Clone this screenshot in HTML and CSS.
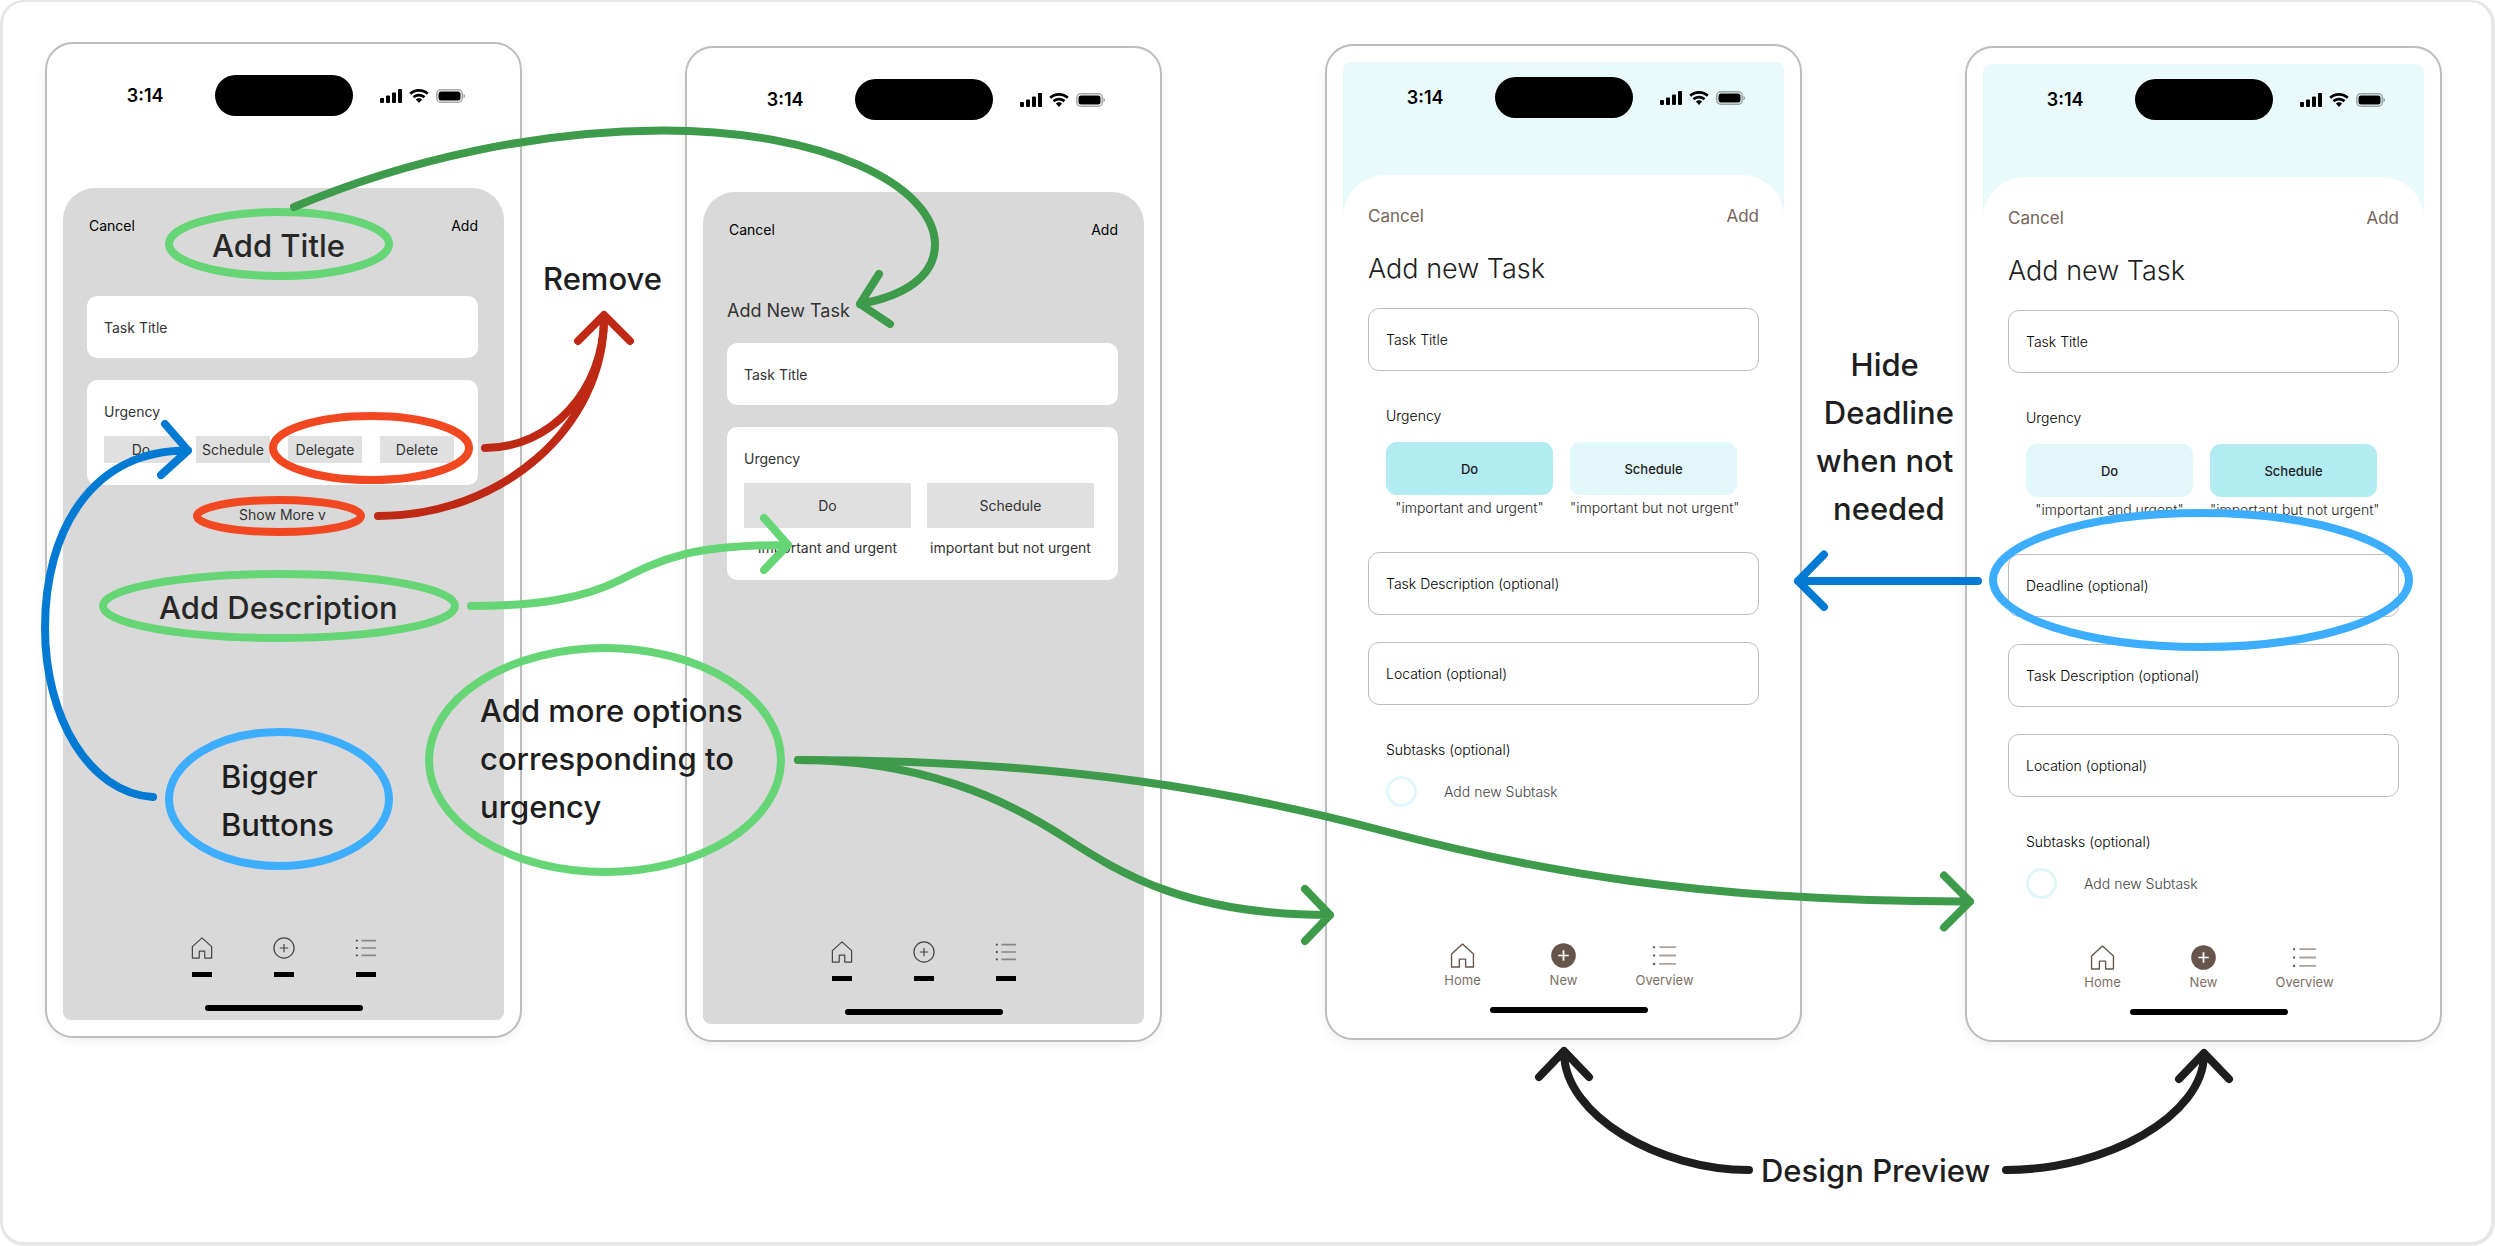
FILE: index.html
```html
<!DOCTYPE html>
<html lang="en">
<head>
<meta charset="utf-8">
<title>Add Task – design iterations</title>
<link rel="stylesheet" href="styles.css">
</head>
<body>
<svg class="defs" aria-hidden="true">
  <symbol id="signal" viewBox="0 0 22 14"><rect x="0" y="9" width="4" height="5" rx="1"/><rect x="6" y="6.500" width="4" height="7.500" rx="1"/><rect x="12" y="3.500" width="4" height="10.500" rx="1"/><rect x="18" y="0" width="4" height="14" rx="1"/></symbol>
  <symbol id="wifi" viewBox="0 0 20 14"><path d="M10 0C6.200 0 2.700 1.400 .3 3.700L2.200 5.700C4.200 3.800 7 2.700 10 2.700s5.800 1.100 7.800 3l1.900-2C17.300 1.400 13.800 0 10 0z"/><path d="M10 4.700c-2.500 0-4.700.9-6.400 2.500l1.900 2C6.700 8.100 8.300 7.400 10 7.400s3.300.7 4.500 1.800l1.900-2C14.700 5.600 12.500 4.700 10 4.700z"/><path d="M10 9.300c-1.200 0-2.300.5-3.100 1.300L10 14l3.100-3.400C12.300 9.800 11.200 9.300 10 9.300z"/></symbol>
  <symbol id="battery" viewBox="0 0 30 14"><rect x=".75" y=".75" width="25.500" height="12.500" rx="4" fill="none" stroke="#000" stroke-opacity=".35" stroke-width="1.500"/><rect x="2.500" y="2.500" width="22" height="9" rx="2.500"/><path d="M27.500 4.700v4.600c.9-.4 1.500-1.300 1.500-2.300s-.6-1.900-1.500-2.300z" fill-opacity=".4"/></symbol>
  <symbol id="home" viewBox="0 0 24 24"><path d="M12 1L1.500 10.500V23h7.500v-7.500h6V23h7.500V10.500z" fill="none" stroke="currentColor" stroke-width="1.300" stroke-linejoin="round"/></symbol>
  <symbol id="plus" viewBox="0 0 24 24"><circle cx="12" cy="12" r="11" fill="none" stroke="currentColor" stroke-width="1.300"/><path d="M12 7.500v9M7.500 12h9" stroke="currentColor" stroke-width="1.300"/></symbol>
  <symbol id="plus-solid" viewBox="0 0 26 26"><circle cx="13" cy="13" r="12.800" fill="currentColor"/><path d="M13 7.500v11M7.500 13h11" stroke="#fff" stroke-width="1.800"/></symbol>
  <symbol id="list" viewBox="0 0 24 24"><path d="M7 4h16M7 12h16M7 20h16" stroke="currentColor" stroke-width="1.800" opacity=".55"/><path d="M1 4h2M1 12h2M1 20h2" stroke="currentColor" stroke-width="2"/></symbol>
</svg>

<main class="board">

  <section class="phone phone-1 wireframe">
    <div class="screen">
      <header class="status"><span class="time">3:14</span><span class="island"></span><span class="system"><svg class="signal"><use href="#signal"/></svg><svg class="wifi"><use href="#wifi"/></svg><svg class="battery"><use href="#battery"/></svg></span></header>
      <div class="sheet">
        <form class="form">
          <div class="actions"><button type="button">Cancel</button><button type="button">Add</button></div>
          <input class="field spaced" type="text" placeholder="Task Title" aria-label="Task Title">
          <div class="card" role="group" aria-labelledby="u1">
            <p class="label" id="u1">Urgency</p>
            <div class="choices small">
              <button type="button">Do</button><button type="button">Schedule</button><button type="button">Delegate</button><button type="button">Delete</button>
            </div>
          </div>
          <button class="more" type="button">Show More v</button>
        </form>
        <nav class="tabs"><a href="#" aria-label="Home"><svg><use href="#home"/></svg><i></i></a><a href="#" aria-label="New"><svg><use href="#plus"/></svg><i></i></a><a href="#" aria-label="Overview"><svg><use href="#list"/></svg><i></i></a></nav>
        <div class="indicator"></div>
      </div>
    </div>
  </section>

  <section class="phone phone-2 wireframe">
    <div class="screen">
      <header class="status"><span class="time">3:14</span><span class="island"></span><span class="system"><svg class="signal"><use href="#signal"/></svg><svg class="wifi"><use href="#wifi"/></svg><svg class="battery"><use href="#battery"/></svg></span></header>
      <div class="sheet">
        <form class="form">
          <div class="actions"><button type="button">Cancel</button><button type="button">Add</button></div>
          <h2 class="title">Add New Task</h2>
          <input class="field" type="text" placeholder="Task Title" aria-label="Task Title">
          <div class="card" role="group" aria-labelledby="u2">
            <p class="label" id="u2">Urgency</p>
            <div class="choices">
              <div><button type="button">Do</button><p>important and urgent</p></div>
              <div><button type="button">Schedule</button><p>important but not urgent</p></div>
            </div>
          </div>
        </form>
        <nav class="tabs"><a href="#" aria-label="Home"><svg><use href="#home"/></svg><i></i></a><a href="#" aria-label="New"><svg><use href="#plus"/></svg><i></i></a><a href="#" aria-label="Overview"><svg><use href="#list"/></svg><i></i></a></nav>
        <div class="indicator"></div>
      </div>
    </div>
  </section>

  <section class="phone phone-3 preview">
    <div class="screen">
      <header class="status"><span class="time">3:14</span><span class="island"></span><span class="system"><svg class="signal"><use href="#signal"/></svg><svg class="wifi"><use href="#wifi"/></svg><svg class="battery"><use href="#battery"/></svg></span></header>
      <div class="sheet">
        <form class="form">
          <div class="actions"><button type="button">Cancel</button><button type="button">Add</button></div>
          <h2 class="title">Add new Task</h2>
          <input class="field" type="text" placeholder="Task Title" aria-label="Task Title">
          <div class="group" role="group" aria-labelledby="u3">
            <p class="label" id="u3">Urgency</p>
            <div class="choices">
              <div><button class="selected" type="button">Do</button><p>"important and urgent"</p></div>
              <div><button type="button">Schedule</button><p>"important but not urgent"</p></div>
            </div>
          </div>
          <input class="field" type="text" placeholder="Task Description (optional)" aria-label="Task Description">
          <input class="field" type="text" placeholder="Location (optional)" aria-label="Location">
          <div class="group subtasks" role="group" aria-labelledby="s3">
            <p class="label" id="s3">Subtasks (optional)</p>
            <label class="subtask"><input type="checkbox">Add new Subtask</label>
          </div>
        </form>
        <nav class="tabs"><a href="#"><svg><use href="#home"/></svg><span>Home</span></a><a href="#"><svg><use href="#plus-solid"/></svg><span>New</span></a><a href="#"><svg><use href="#list"/></svg><span>Overview</span></a></nav>
        <div class="indicator"></div>
      </div>
    </div>
  </section>

  <section class="phone phone-4 preview">
    <div class="screen">
      <header class="status"><span class="time">3:14</span><span class="island"></span><span class="system"><svg class="signal"><use href="#signal"/></svg><svg class="wifi"><use href="#wifi"/></svg><svg class="battery"><use href="#battery"/></svg></span></header>
      <div class="sheet">
        <form class="form">
          <div class="actions"><button type="button">Cancel</button><button type="button">Add</button></div>
          <h2 class="title">Add new Task</h2>
          <input class="field" type="text" placeholder="Task Title" aria-label="Task Title">
          <div class="group" role="group" aria-labelledby="u4">
            <p class="label" id="u4">Urgency</p>
            <div class="choices">
              <div><button type="button">Do</button><p>"important and urgent"</p></div>
              <div><button class="selected" type="button">Schedule</button><p>"important but not urgent"</p></div>
            </div>
          </div>
          <input class="field" type="text" placeholder="Deadline (optional)" aria-label="Deadline">
          <input class="field" type="text" placeholder="Task Description (optional)" aria-label="Task Description">
          <input class="field" type="text" placeholder="Location (optional)" aria-label="Location">
          <div class="group subtasks" role="group" aria-labelledby="s4">
            <p class="label" id="s4">Subtasks (optional)</p>
            <label class="subtask"><input type="checkbox">Add new Subtask</label>
          </div>
        </form>
        <nav class="tabs"><a href="#"><svg><use href="#home"/></svg><span>Home</span></a><a href="#"><svg><use href="#plus-solid"/></svg><span>New</span></a><a href="#"><svg><use href="#list"/></svg><span>Overview</span></a></nav>
        <div class="indicator"></div>
      </div>
    </div>
  </section>

  <p class="note note-title soft">Add Title</p>
  <p class="note note-remove">Remove</p>
  <p class="note note-description soft">Add Description</p>
  <p class="note note-buttons">Bigger
Buttons</p>
  <p class="note note-options">Add more options
corresponding to
urgency</p>
  <p class="note note-deadline">Hide 
Deadline
when not 
needed</p>
  <p class="note note-preview">Design Preview</p>

  <svg class="marks" width="2495" height="1246" viewBox="0 0 2495 1246" aria-hidden="true">
    <g class="light-green">
      <ellipse cx="279" cy="244" rx="110" ry="32"/>
      <ellipse cx="279" cy="606" rx="176" ry="32"/>
      <ellipse cx="605" cy="760" rx="176" ry="112"/>
      <path d="M471 606C540 606 584 598 620 580C662 559 690 545 788 545M764 518L788 545L764 570"/>
    </g>
    <g class="orange">
      <ellipse cx="371" cy="448" rx="98" ry="32"/>
      <ellipse cx="279" cy="516" rx="82" ry="16"/>
    </g>
    <g class="light-blue">
      <ellipse cx="279" cy="799" rx="110" ry="67"/>
      <ellipse cx="2201" cy="580" rx="208" ry="67"/>
    </g>
    <g class="green">
      <path d="M294 207C410 158 540 131 661 130.500C825 130 935 186 935 244.500C935 276 905 296 860 304M879 274L860 304L890 324"/>
      <path d="M798 760C920 760 1004 798 1064 837C1124 876 1190 915 1330 915M1305 889L1330 915L1305 941"/>
      <path d="M798 760C1070 760 1240 793 1384 831C1528 869 1698 902 1970 901.500M1944 875.500L1970 901.500L1944 927.500"/>
    </g>
    <g class="red">
      <path d="M485 448C551 448 604 390 604 318"/>
      <path d="M378 516C502 516 604 427 604 318M578 341L604 315L630 341"/>
    </g>
    <g class="blue">
      <path d="M153 797C89 793 45 717 45 628C45 530 92 450 188 450.500M165 424L188 450.500L161 475"/>
      <path d="M1978 581H1798M1824 554.500L1798 581L1824 607"/>
    </g>
    <g class="black">
      <path d="M1749 1170C1660 1170 1564 1116 1564 1052M1539 1077L1564 1051L1589 1077"/>
      <path d="M2006 1170C2106 1170 2204 1116 2204 1054M2179 1079L2204 1053L2229 1079"/>
    </g>
  </svg>
</main>
</body>
</html>
```

FILE: styles.css
```css
* { box-sizing: border-box; }

body {
  margin: 0;
  background: #fff;
  font-family: Inter, "Liberation Sans", sans-serif;
  font-size: 14px;
  line-height: 20px;
  color: #1e1e1e;
}

p, h2 { margin: 0; }

button, input {
  font: inherit;
  color: inherit;
  border: 0;
  padding: 0;
  background: none;
}

.defs { display: none; }

/* Whiteboard: phones, notes and marks are free items on it */
.board {
  position: relative;
  min-height: 100vh;
  overflow: hidden;
}

.board::before {
  content: "";
  position: absolute;
  inset: 0;
  border: solid #e6e6e6;
  border-width: 2px 4px 4px 3px;
  border-radius: 24px;
}

.phone {
  position: absolute;
  display: flex;
  width: 477px;
  min-height: 996px;
  padding: 16px;
  border: 2px solid #bdbdbd;
  border-radius: 28px;
  background: #fff;
  box-shadow: 0 4px 12px rgba(0, 0, 0, .06);
}

.phone-1 { left: 45px; top: 42px; }
.phone-2 { left: 685px; top: 46px; }
.phone-3 { left: 1325px; top: 44px; }
.phone-4 { left: 1965px; top: 46px; }

.screen {
  flex: 1;
  display: flex;
  flex-direction: column;
  border-radius: 8px;
  overflow: hidden;
}

.status {
  display: grid;
  grid-template-columns: 1fr auto 1fr;
  align-items: center;
  padding-top: 15px;
}

.time {
  justify-self: end;
  margin-right: 51px;
  font-size: 18px;
  font-weight: 600;
  color: #000;
}

.island {
  width: 138px;
  height: 41px;
  border-radius: 21px;
  background: #000;
}

.system {
  display: flex;
  gap: 7px;
  margin-left: 27px;
}

.signal { width: 22px; height: 14px; }
.wifi { width: 20px; height: 14px; }
.battery { width: 30px; height: 14px; }

.sheet {
  flex: 1;
  display: flex;
  flex-direction: column;
}

.form {
  display: flex;
  flex-direction: column;
}

.actions {
  display: flex;
  justify-content: space-between;
}

.field {
  width: 100%;
  padding: 0 17px;
}

.field::placeholder {
  color: inherit;
  opacity: 1;
}

.choices { display: flex; }

.choices > div {
  width: 167px;
  text-align: center;
}

.choices > div > button { width: 100%; }
.choices p { white-space: nowrap; }

.tabs {
  display: flex;
  justify-content: center;
  margin-top: auto;
}

.tabs a {
  display: flex;
  flex-direction: column;
  align-items: center;
  color: inherit;
  text-decoration: none;
}

.indicator {
  width: 158px;
  height: 6px;
  margin-bottom: 9px;
  align-self: center;
  border-radius: 3px;
  background: #000;
}

/* Low fidelity wireframes */
.wireframe .status { margin-bottom: 72px; }

.wireframe .sheet {
  border-radius: 32px 32px 0 0;
  background: #d9d9d9;
}

.wireframe .form { padding: 28px 26px 0 24px; }

.wireframe .actions {
  padding-left: 2px;
  color: #000;
}

.wireframe .title {
  margin: 59px 0 20px;
  font-size: 18px;
  line-height: 24px;
  font-weight: 400;
}

.wireframe .field {
  height: 62px;
  border-radius: 10px;
  background: #fff;
}

.wireframe .spaced { margin-top: 60px; }

.wireframe .card {
  margin-top: 22px;
  padding: 22px 17px;
  border-radius: 10px;
  background: #fff;
}

.wireframe .label { margin-bottom: 14px; }
.wireframe .choices { gap: 16px; }

.wireframe .choices button {
  height: 45px;
  background: #e0e0e0;
}

.wireframe .choices p { margin-top: 10px; }
.wireframe .small { gap: 18px; }

.wireframe .small button {
  width: 74px;
  height: 27px;
}

.more {
  margin-top: 20px;
  align-self: center;
}

.wireframe .form :is(.title, .field, .card, .more) { color: #333; }

.wireframe .tabs {
  gap: 60px;
  margin-bottom: 28px;
  color: #444;
}

.wireframe .tabs a { gap: 13px; }

.wireframe .tabs svg {
  width: 22px;
  height: 22px;
}

.wireframe .tabs i {
  width: 20px;
  height: 5px;
  background: #000;
}

/* High fidelity previews */
.preview .screen { background: #eafafb; }
.preview .status { margin-bottom: 57px; }

.preview .sheet {
  border-radius: 42px 42px 0 0;
  background: #fff;
}

.preview .form {
  padding: 30px 25px 0;
  font-weight: 300;
}

.preview .actions {
  font-size: 17px;
  line-height: 22px;
  font-weight: 400;
  color: #75655b;
}

.preview .title {
  margin: 26px 0 23px;
  font-size: 27px;
  line-height: 32px;
  font-weight: 300;
}

.preview .field {
  height: 63px;
  border: 1px solid #bdbdbd;
  border-radius: 11px;
}

.preview .field,
.preview .label { color: #000; }

.preview .field + .field { margin-top: 27px; }

.group { padding: 35px 18px 34px; }
.group .label { margin-bottom: 16px; }
.group .choices { gap: 17px; }

.group .choices button {
  height: 53px;
  border-radius: 11px;
  background: #e2f7fa;
  font-size: 13px;
  font-weight: 500;
}

.group .choices .selected { background: #b2ebf2; }
.group .choices p { margin-top: 3px; }

.subtasks { padding-bottom: 0; }

.subtask {
  display: flex;
  align-items: center;
  gap: 27px;
  color: #444;
}

.subtask input {
  appearance: none;
  width: 31px;
  height: 31px;
  margin: 0;
  border: 3px solid #e2f7fa;
  border-radius: 50%;
}

.preview .tabs {
  margin-bottom: 19px;
  font-size: 13px;
  line-height: 16px;
  color: #65554b;
}

.preview .tabs a {
  width: 101px;
  gap: 4px;
}

.preview .tabs span { color: #7d6f66; }

.preview .tabs svg {
  width: 25px;
  height: 25px;
}

.preview .indicator { margin-left: 10px; }

/* Annotations */
.note {
  position: absolute;
  font-size: 31px;
  line-height: 48px;
  font-weight: 500;
  white-space: pre;
}

.soft { opacity: .95; }

.note-title { left: 212px; top: 222px; }
.note-remove { left: 543px; top: 255px; }
.note-description { left: 159px; top: 584px; }
.note-buttons { left: 221px; top: 753px; }
.note-options { left: 480px; top: 687px; }
.note-deadline { left: 1816px; top: 341px; text-align: center; }
.note-preview { left: 1761px; top: 1147px; }

.marks {
  position: absolute;
  left: 0;
  top: 0;
  fill: none;
  stroke-width: 8;
  stroke-linecap: round;
  stroke-linejoin: round;
  pointer-events: none;
}

.light-green { stroke: #66d575; }
.green { stroke: #3e9b4b; }
.orange { stroke: #f24822; }
.red { stroke: #bd2915; }
.light-blue { stroke: #3dadff; }
.blue { stroke: #007ad2; }
.black { stroke: #1e1e1e; }
```
